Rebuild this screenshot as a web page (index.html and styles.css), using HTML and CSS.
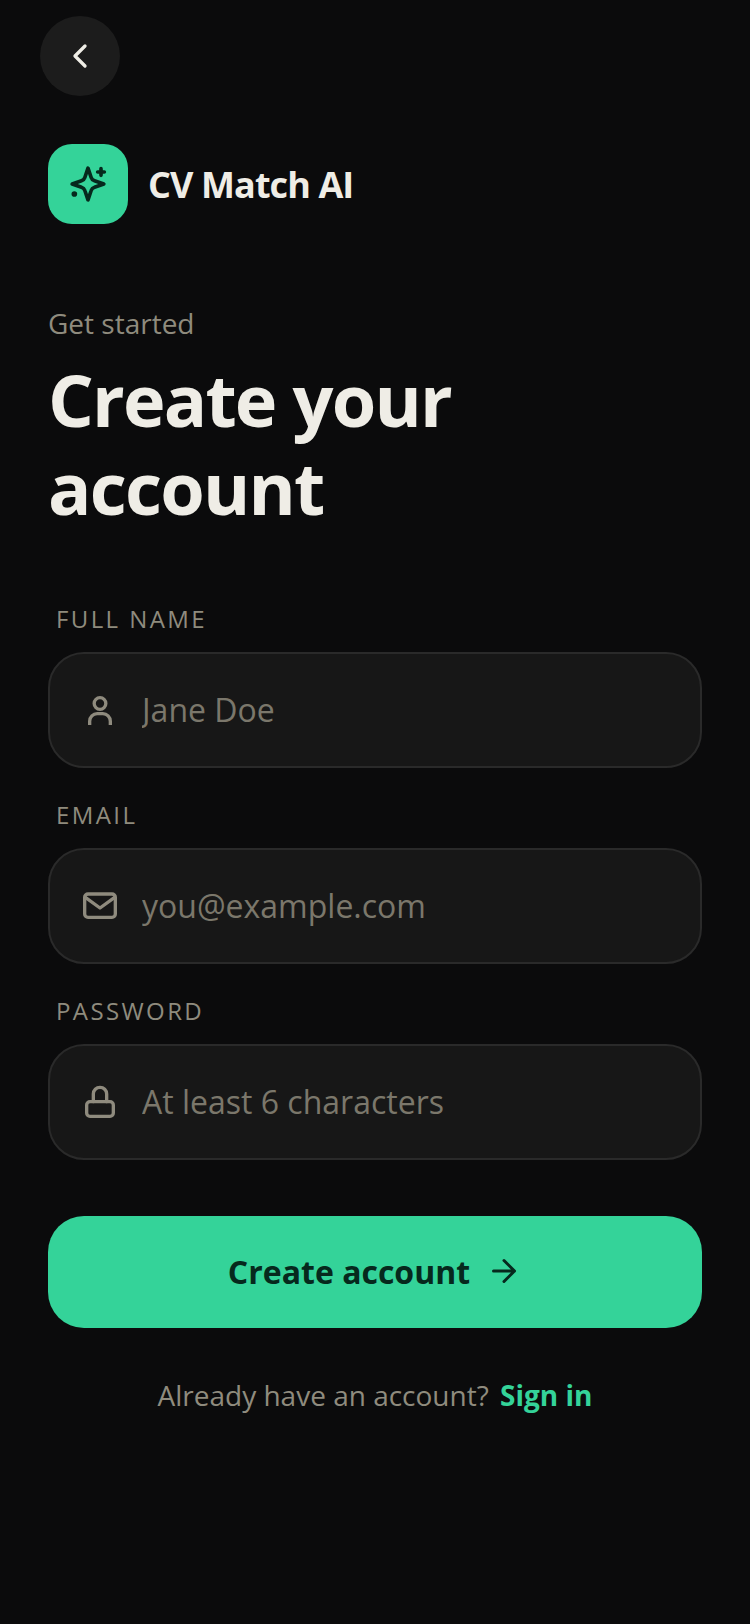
FILE: index.html
```html
<!DOCTYPE html>
<html lang="en">
<head>
    <meta charset="UTF-8">
    <meta name="viewport" content="width=device-width, initial-scale=1.0">
    <title>CV Match AI - Create account</title>
    <link rel="stylesheet" href="styles.css">
</head>
<body>
    <div class="page">
        <button class="back-btn" type="button" aria-label="Back">
            <svg width="40" height="40" viewBox="0 0 24 24" fill="none" stroke="#efede6" stroke-width="2" stroke-linecap="round" stroke-linejoin="round"><path d="M15 6l-6 6 6 6"/></svg>
        </button>

        <div class="brand">
            <div class="brand-logo">
                <svg width="40" height="40" viewBox="0 0 24 24" fill="none" stroke="#06291d" stroke-width="2.200" stroke-linecap="round" stroke-linejoin="round">
                    <path d="M12 2.500L13.900 8.100a3 3 0 0 0 2 2L21.500 12l-5.600 1.900a3 3 0 0 0-2 2L12 21.500l-1.900-5.600a3 3 0 0 0-2-2L2.500 12l5.600-1.900a3 3 0 0 0 2-2z"/>
                    <path d="M19.800 2.800v4M17.800 4.800h4"/>
                    <path d="M3.800 18h.01" stroke-width="3.400"/>
                </svg>
            </div>
            <span class="brand-name">CV Match AI</span>
        </div>

        <p class="eyebrow">Get started</p>
        <h1 class="title">Create your account</h1>

        <form class="form">
            <label class="field-label" for="name">FULL NAME</label>
            <div class="field">
                <svg width="40" height="40" viewBox="0 0 24 24" fill="none" stroke="#8f8b7e" stroke-width="2" stroke-linejoin="round"><circle cx="12" cy="8.100" r="3.500"/><path d="M5.800 21v-2.300a4.500 4.500 0 0 1 4.500-4.500h3.400a4.500 4.500 0 0 1 4.500 4.500V21"/></svg>
                <input id="name" type="text" placeholder="Jane Doe">
            </div>

            <label class="field-label" for="email">EMAIL</label>
            <div class="field">
                <svg width="40" height="40" viewBox="0 0 24 24" fill="none" stroke="#8f8b7e" stroke-width="2" stroke-linecap="round" stroke-linejoin="round"><rect x="2.800" y="4.800" width="18.400" height="14" rx="2"/><path d="M3.200 6.800L12 13.200l8.800-6.400"/></svg>
                <input id="email" type="email" placeholder="you@example.com">
            </div>

            <label class="field-label" for="password">PASSWORD</label>
            <div class="field">
                <svg width="40" height="40" viewBox="0 0 24 24" fill="none" stroke="#8f8b7e" stroke-width="2" stroke-linecap="round" stroke-linejoin="round"><rect x="4" y="11.800" width="16" height="8.800" rx="2"/><path d="M8 11.800V7.200a4 4 0 0 1 8 0v4.600"/></svg>
                <input id="password" type="password" placeholder="At least 6 characters">
            </div>

            <button class="submit-btn" type="submit">
                <span>Create account</span>
                <svg width="36" height="36" viewBox="0 0 24 24" fill="none" stroke="#06291d" stroke-width="2" stroke-linecap="round" stroke-linejoin="round"><path d="M5 12h14M12 5l7 7-7 7"/></svg>
            </button>
        </form>

        <p class="signin">Already have an account? <a href="#">Sign in</a></p>
    </div>
</body>
</html>
```

FILE: styles.css
```css
* {
    box-sizing: border-box;
}
html, body {
    margin: 0;
    height: 100%;
}
body {
    background-color: #0b0b0c;
    color: #efede6;
    font-family: "Open Sans", sans-serif;
}
.page {
    min-height: 1624px;
    padding: 16px 48px 0;
}
.back-btn {
    display: flex;
    align-items: center;
    justify-content: center;
    width: 80px;
    height: 80px;
    margin-left: -8px;
    padding: 0;
    border: none;
    border-radius: 50%;
    background-color: #1c1c1c;
}
.brand {
    display: flex;
    align-items: center;
    gap: 20px;
    margin-top: 48px;
}
.brand-logo {
    display: flex;
    align-items: center;
    justify-content: center;
    width: 80px;
    height: 80px;
    border-radius: 24px;
    background-color: #34d399;
}
.brand-name {
    font-size: 36px;
    font-weight: 700;
    letter-spacing: -0.9px;
}
.eyebrow {
    margin: 79px 0 0;
    font-size: 28px;
    line-height: 40px;
    color: #8f8b7e;
}
.title {
    max-width: 500px;
    margin: 12px 0 0;
    font-size: 72px;
    font-weight: 700;
    line-height: 88px;
    letter-spacing: -1.8px;
}
.form {
    margin-top: 72px;
}
.field-label {
    display: block;
    margin: 0 0 17px 8px;
    font-size: 24px;
    line-height: 32px;
    letter-spacing: 2.4px;
    color: #8f8b7e;
}
.field {
    display: flex;
    align-items: center;
    gap: 22px;
    height: 116px;
    margin-bottom: 31px;
    padding: 0 30px;
    border: 2px solid #2a2a2a;
    border-radius: 36px;
    background-color: #171717;
}
.field input {
    flex: 1;
    min-width: 0;
    border: none;
    outline: none;
    padding: 0 0 2px;
    background: none;
    color: #efede6;
    font-family: inherit;
    font-size: 32px;
}
.field input::placeholder {
    color: #7b776b;
    opacity: 1;
}
.submit-btn {
    display: flex;
    align-items: center;
    justify-content: center;
    gap: 16px;
    width: 100%;
    height: 112px;
    margin-top: 56px;
    padding: 0 0 2px;
    border: none;
    border-radius: 36px;
    background-color: #34d399;
    color: #06291d;
    font-family: inherit;
    font-size: 32px;
    font-weight: 700;
}
.signin {
    margin: 47px 0 0;
    text-align: center;
    font-size: 28px;
    line-height: 40px;
    color: #8f8b7e;
}
.signin a {
    margin-left: 4px;
    color: #34d399;
    font-weight: 700;
    text-decoration: none;
}
```
